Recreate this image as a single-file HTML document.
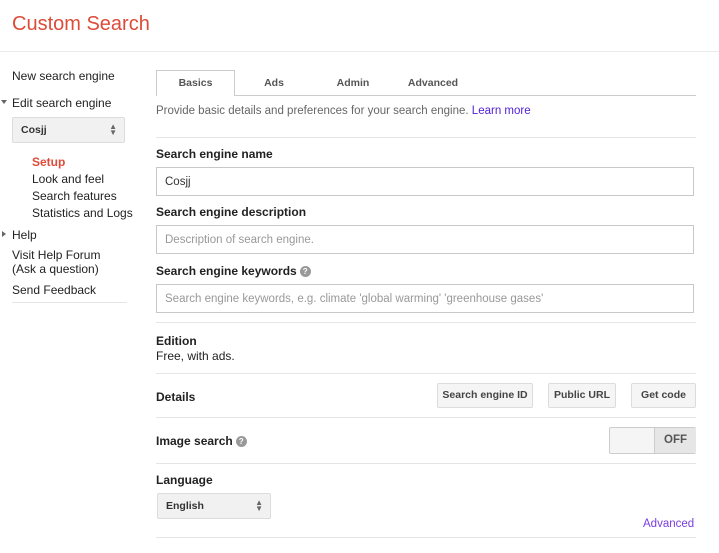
<!DOCTYPE html>
<html><head><style>
*{margin:0;padding:0;box-sizing:border-box}
body{width:719px;height:553px;position:relative;background:#fff;font-family:"Liberation Sans",Arial,sans-serif;font-size:12px;color:#222;overflow:hidden}
.a{position:absolute;white-space:nowrap}
.b{font-weight:bold}
.hr{position:absolute;height:1px;background:#e5e5e5}
.inp{position:absolute;left:156px;width:538px;height:29px;border:1px solid #c8c8c8;padding:0 8px;line-height:29px;color:#999;font-size:11.5px}
.btn{position:absolute;top:383px;height:25px;background:#f5f5f5;border:1px solid #dcdcdc;border-radius:2px;font-size:10.5px;font-weight:bold;color:#444;text-align:center;line-height:22px}
.sel{position:absolute;background:#f1f1f1;border:1px solid #dcdcdc;border-radius:2px;font-size:10.5px;font-weight:bold;color:#333;padding-left:8px}
.arr{position:absolute;right:7px;top:50%;transform:translateY(-50%);font-size:8px;line-height:6px;color:#666}
.q{display:inline-block;width:11px;height:11px;border-radius:50%;background:#999;color:#fff;font-size:8px;text-align:center;line-height:11px;vertical-align:1px;margin-left:3px;font-weight:bold}
.tab{position:absolute;top:77px;font-size:10.5px;font-weight:bold;color:#555;text-align:center}
.tri{position:absolute;width:0;height:0}
</style></head><body>
<div class="a" style="left:12px;top:13px;font-size:20px;color:#dd4b39">Custom Search</div>
<div class="hr" style="left:0;top:51px;width:719px;background:#ebebeb"></div>

<div class="a" style="left:12px;top:69px">New search engine</div>
<div class="tri" style="left:1px;top:100px;border-left:3px solid transparent;border-right:3px solid transparent;border-top:4px solid #666"></div>
<div class="a" style="left:12px;top:96px">Edit search engine</div>
<div class="sel" style="left:12px;top:117px;width:113px;height:26px;line-height:24px">Cosjj<span class="arr">▲<br>▼</span></div>
<div class="a b" style="left:32px;top:155px;color:#dd4b39">Setup</div>
<div class="a" style="left:32px;top:172px">Look and feel</div>
<div class="a" style="left:32px;top:189px">Search features</div>
<div class="a" style="left:32px;top:206px">Statistics and Logs</div>
<div class="tri" style="left:2px;top:231px;border-top:3px solid transparent;border-bottom:3px solid transparent;border-left:4px solid #666"></div>
<div class="a" style="left:12px;top:228px">Help</div>
<div class="a" style="left:12px;top:248px">Visit Help Forum</div>
<div class="a" style="left:12px;top:262px">(Ask a question)</div>
<div class="a" style="left:12px;top:283px">Send Feedback</div>
<div class="hr" style="left:12px;top:302px;width:115px"></div>

<div class="hr" style="left:156px;top:95px;width:540px;background:#ccc"></div>
<div class="a" style="left:156px;top:70px;width:79px;height:26px;border:1px solid #ccc;border-bottom:none;background:#fff"></div>
<div class="tab" style="left:156px;width:79px">Basics</div>
<div class="tab" style="left:254px;width:40px">Ads</div>
<div class="tab" style="left:333px;width:40px">Admin</div>
<div class="tab" style="left:405px;width:56px">Advanced</div>

<div class="a" style="left:156px;top:105px;color:#666;font-size:11.5px">Provide basic details and preferences for your search engine. <span style="color:#5120d4">Learn more</span></div>
<div class="hr" style="left:156px;top:137px;width:540px"></div>
<div class="a b" style="left:156px;top:147px">Search engine name</div>
<div class="inp" style="top:167px;color:#333">Cosjj</div>
<div class="a b" style="left:156px;top:205px">Search engine description</div>
<div class="inp" style="top:225px">Description of search engine.</div>
<div class="a b" style="left:156px;top:264px">Search engine keywords<span class="q">?</span></div>
<div class="inp" style="top:284px">Search engine keywords, e.g. climate 'global warming' 'greenhouse gases'</div>
<div class="hr" style="left:156px;top:322px;width:540px"></div>
<div class="a b" style="left:156px;top:334px">Edition</div>
<div class="a" style="left:156px;top:349px">Free, with ads.</div>
<div class="hr" style="left:156px;top:373px;width:540px"></div>
<div class="a b" style="left:156px;top:390px">Details</div>
<div class="btn" style="left:437px;width:96px">Search engine ID</div>
<div class="btn" style="left:548px;width:68px">Public URL</div>
<div class="btn" style="left:631px;width:65px">Get code</div>
<div class="hr" style="left:156px;top:417px;width:540px"></div>
<div class="a b" style="left:156px;top:434px">Image search<span class="q">?</span></div>
<div style="position:absolute;left:609px;top:427px;width:87px;height:27px;border:1px solid #ccc;border-radius:2px;background:#f5f5f5"><div style="position:absolute;left:44px;top:0;width:42px;height:25px;background:#e6e6e6;border-left:1px solid #ccc;font-size:11.5px;font-weight:bold;color:#555;text-align:center;line-height:25px">OFF</div></div>
<div class="hr" style="left:156px;top:463px;width:540px"></div>
<div class="a b" style="left:156px;top:473px">Language</div>
<div class="sel" style="left:157px;top:493px;width:114px;height:26px;line-height:24px">English<span class="arr">▲<br>▼</span></div>
<div class="a" style="left:643px;top:518px;color:#7b3de0;font-size:11.5px">Advanced</div>
<div class="hr" style="left:156px;top:537px;width:540px"></div>
</body></html>
